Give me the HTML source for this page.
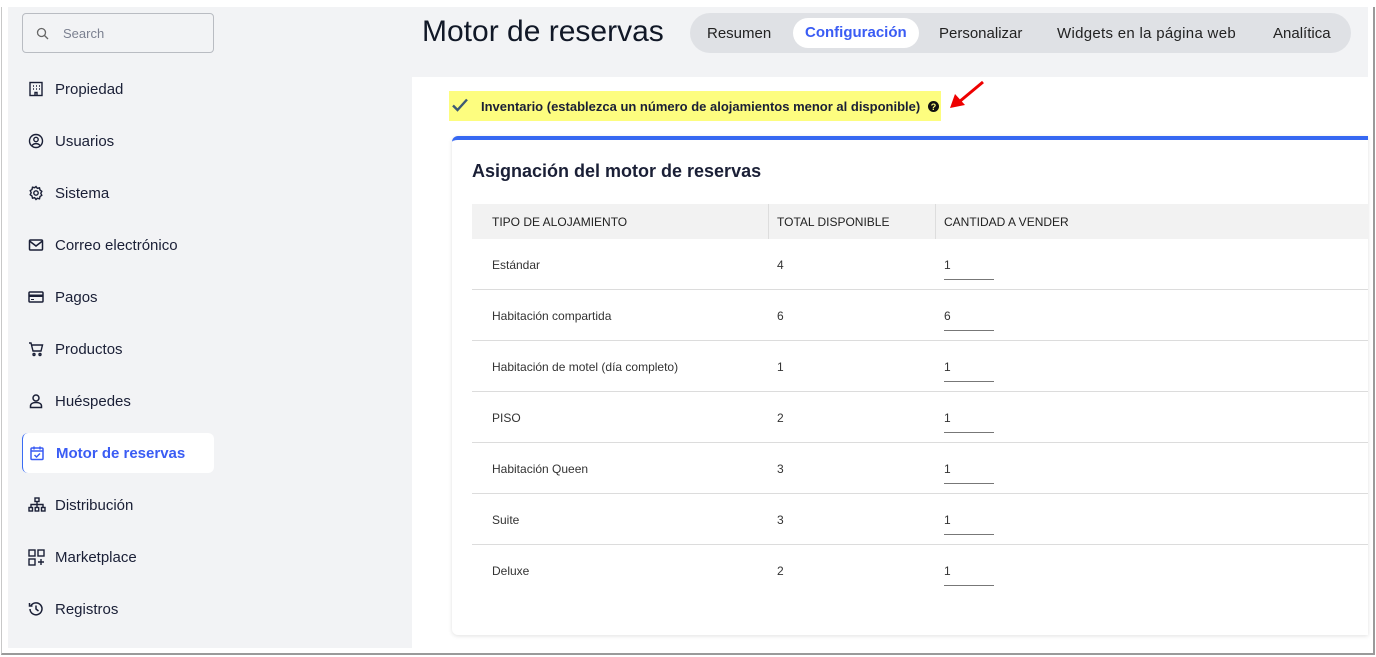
<!DOCTYPE html>
<html><head><meta charset="utf-8"><style>
*{box-sizing:border-box;margin:0;padding:0}
body{width:1376px;height:657px;background:#fff;font-family:"Liberation Sans",sans-serif;color:#1a1f36;position:relative;overflow:hidden}
.frame{position:absolute;left:1px;top:7px;width:1374px;height:648px;border-right:2px solid #9a9a9a;border-bottom:2px solid #9a9a9a;border-left:1px solid #c8c8c8}
.side{position:absolute;left:8px;top:7px;width:404px;height:641px;background:#f2f3f5}
.search{position:absolute;left:22px;top:13px;width:192px;height:40px;border:1px solid #b9bcc2;border-radius:4px;background:#f2f3f5}
.search span{position:absolute;left:40px;top:12px;font-size:13px;color:#7b8090}
.item{position:absolute;left:22px;width:192px;height:40px;font-size:15px;color:#1a1f36}
.item svg{position:absolute;left:6px;top:12px}
.item span{position:absolute;left:33px;top:12px}
.item.act{background:#fff;border-radius:6px;border-left:1.5px solid #3a6cf4;color:#3a5cf4;font-weight:bold}
.top{position:absolute;left:412px;top:7px;width:956px;height:70px;background:#f2f3f5}
h1{position:absolute;left:422px;top:15px;font-size:30px;font-weight:normal;color:#111827}
.tabs{position:absolute;left:690px;top:13px;width:661px;height:40px;border-radius:20px;background:#dfe1e5}
.tab{position:absolute;top:12px;font-size:15px;color:#222}
.tab.act{top:5px;height:30px;padding:6px 12px;background:#fff;border-radius:15px;color:#3a5cf4;font-weight:bold}
.hl{position:absolute;left:449px;top:91px;width:492px;height:30px;background:#fdfd7f}
.hl span{position:absolute;left:32px;top:8px;font-size:13px;font-weight:bold;color:#1a1f36;white-space:nowrap}
.card{position:absolute;left:452px;top:136px;width:916px;height:499px;background:#fff;border-top:4px solid #3668f2;border-radius:6px 0 0 6px;box-shadow:0 1px 4px rgba(0,0,0,.12)}
h2{position:absolute;left:472px;top:161px;font-size:18px;color:#1a1f36}
.th{position:absolute;left:472px;top:204px;width:896px;height:35px;background:#f2f2f2;font-size:12px;color:#222}
.th span{position:absolute;top:11px}
.row{position:absolute;left:472px;width:896px;height:51px;border-bottom:1px solid #dcdcdc;font-size:12px;color:#333}
.row span{position:absolute;top:19px}
.row i{position:absolute;left:472px;top:40px;width:50px;border-bottom:1px solid #777}
</style></head><body>
<div class="frame"></div>
<div class="side"></div>
<div class="search"><svg style="position:absolute;left:13px;top:13px" width="13" height="13" viewBox="0 0 13 13"><circle cx="5.5" cy="5.5" r="4" fill="none" stroke="#666" stroke-width="1.3"/><path d="M8.5 8.5L12 12" stroke="#666" stroke-width="1.3"/></svg><span>Search</span></div>

<div class="item" style="top:69px"><svg width="16" height="16" viewBox="0 0 16 16" fill="none" stroke="#1a1f36" stroke-width="1.4"><rect x="2" y="1.5" width="12" height="13"/><path d="M5 5h1M8 5h1M11 5h1M5 8h1M8 8h1M11 8h1M7 14.5v-3h2v3" /></svg><span>Propiedad</span></div>
<div class="item" style="top:121px"><svg width="16" height="16" viewBox="0 0 16 16" fill="none" stroke="#1a1f36" stroke-width="1.4"><circle cx="8" cy="8" r="6.5"/><circle cx="8" cy="6.5" r="2.2"/><path d="M4 12.5c2-2.5 6-2.5 8 0"/></svg><span>Usuarios</span></div>
<div class="item" style="top:173px"><svg width="16" height="16" viewBox="0 0 16 16" fill="none" stroke="#1a1f36" stroke-width="1.4"><circle cx="8" cy="8" r="2.2"/><path d="M8 1.5l1.3 1.8 2.2-.5.5 2.2 1.8 1.3-1 2 1 2-1.8 1.3-.5 2.2-2.2-.5L8 14.5l-1.3-1.8-2.2.5-.5-2.2L2.2 9.7l1-2-1-2 1.8-1.3.5-2.2 2.2.5z"/></svg><span>Sistema</span></div>
<div class="item" style="top:225px"><svg width="16" height="16" viewBox="0 0 16 16" fill="none" stroke="#1a1f36" stroke-width="1.5"><rect x="1.5" y="3" width="13" height="10" rx="1"/><path d="M1.5 4l6.5 5 6.5-5"/></svg><span>Correo electrónico</span></div>
<div class="item" style="top:277px"><svg width="16" height="16" viewBox="0 0 16 16"><rect x="1" y="3" width="14" height="10" rx="1" fill="none" stroke="#1a1f36" stroke-width="1.5"/><rect x="1" y="5.5" width="14" height="2.5" fill="#1a1f36"/><path d="M3 10.5h3" stroke="#1a1f36"/></svg><span>Pagos</span></div>
<div class="item" style="top:329px"><svg width="16" height="16" viewBox="0 0 16 16" fill="none" stroke="#1a1f36" stroke-width="1.4"><path d="M1 2h2l2 8h8l1.5-6H4"/><circle cx="6" cy="13.5" r="1"/><circle cx="12" cy="13.5" r="1"/></svg><span>Productos</span></div>
<div class="item" style="top:381px"><svg width="16" height="16" viewBox="0 0 16 16" fill="none" stroke="#1a1f36" stroke-width="1.5"><circle cx="8" cy="5" r="3"/><path d="M2.5 14.5v-1.5c0-2 2-3.5 5.5-3.5s5.5 1.5 5.5 3.5v1.5z"/></svg><span>Huéspedes</span></div>
<div class="item act" style="top:433px"><svg width="16" height="16" viewBox="0 0 16 16" fill="none" stroke="#3a5cf4" stroke-width="1.5"><rect x="2" y="3" width="12" height="11.5" rx="1"/><path d="M2 6h12M5 1.5v3M11 1.5v3M5.5 10l2 2 3.5-3.5"/></svg><span>Motor de reservas</span></div>
<div class="item" style="top:485px"><svg width="18" height="16" viewBox="0 0 18 16" fill="none" stroke="#1a1f36" stroke-width="1.4"><rect x="7" y="1" width="4" height="3.5"/><path d="M9 4.5v3M3 10V7.5h12V10M9 7.5V10"/><rect x="1" y="10.5" width="3.5" height="3.5"/><rect x="7.2" y="10.5" width="3.5" height="3.5"/><rect x="13.5" y="10.5" width="3.5" height="3.5"/></svg><span>Distribución</span></div>
<div class="item" style="top:537px"><svg width="17" height="17" viewBox="0 0 17 17" fill="none" stroke="#1a1f36" stroke-width="1.4"><rect x="1" y="1" width="6" height="6"/><rect x="10" y="1" width="6" height="6"/><rect x="1" y="10" width="6" height="6"/><path d="M13 10v6M10 13h6"/></svg><span>Marketplace</span></div>
<div class="item" style="top:589px"><svg width="16" height="16" viewBox="0 0 16 16" fill="none" stroke="#1a1f36" stroke-width="1.5"><path d="M3 4.5A6 6 0 1 1 2 8"/><path d="M1.5 2v3h3M8 4.5V8l2.5 2"/></svg><span>Registros</span></div>

<div class="top"></div>
<h1>Motor de reservas</h1>
<div class="tabs">
<span class="tab" style="left:17px">Resumen</span>
<span class="tab act" style="left:103px">Configuración</span>
<span class="tab" style="left:249px">Personalizar</span>
<span class="tab" style="left:367px;letter-spacing:0.3px">Widgets en la página web</span>
<span class="tab" style="left:583px">Analítica</span>
</div>

<div class="hl"><svg style="position:absolute;left:3px;top:7px" width="16" height="14" viewBox="0 0 16 14"><path d="M1 7.5l4.5 4.5L15 1.5" fill="none" stroke="#3d5a74" stroke-width="2.4"/></svg><span>Inventario (establezca un número de alojamientos menor al disponible)</span><svg style="position:absolute;left:479px;top:10px" width="11" height="11" viewBox="0 0 11 11"><circle cx="5.5" cy="5.5" r="5.5" fill="#111"/><text x="5.5" y="9" font-size="9" font-weight="bold" text-anchor="middle" fill="#fdfd7f" font-family="Liberation Sans">?</text></svg></div>
<svg style="position:absolute;left:945px;top:78px" width="45" height="35" viewBox="0 0 45 35"><path d="M38 4L14 24" stroke="#e00" stroke-width="3"/><path d="M5 30l5-14 10 11z" fill="#e00"/></svg>

<div class="card"></div>
<h2>Asignación del motor de reservas</h2>
<div class="th"><span style="left:20px">TIPO DE ALOJAMIENTO</span><span style="left:305px">TOTAL DISPONIBLE</span><span style="left:472px">CANTIDAD A VENDER</span>
<div style="position:absolute;left:296px;top:0;height:35px;border-left:1px solid #ddd"></div><div style="position:absolute;left:463px;top:0;height:35px;border-left:1px solid #ddd"></div></div>

<div class="row" style="top:239px"><span style="left:20px">Estándar</span><span style="left:305px">4</span><span style="left:472px">1</span><i></i></div>
<div class="row" style="top:290px"><span style="left:20px">Habitación compartida</span><span style="left:305px">6</span><span style="left:472px">6</span><i></i></div>
<div class="row" style="top:341px"><span style="left:20px">Habitación de motel (día completo)</span><span style="left:305px">1</span><span style="left:472px">1</span><i></i></div>
<div class="row" style="top:392px"><span style="left:20px">PISO</span><span style="left:305px">2</span><span style="left:472px">1</span><i></i></div>
<div class="row" style="top:443px"><span style="left:20px">Habitación Queen</span><span style="left:305px">3</span><span style="left:472px">1</span><i></i></div>
<div class="row" style="top:494px"><span style="left:20px">Suite</span><span style="left:305px">3</span><span style="left:472px">1</span><i></i></div>
<div class="row" style="top:545px;border-bottom:none"><span style="left:20px">Deluxe</span><span style="left:305px">2</span><span style="left:472px">1</span><i></i></div>
</body></html>
